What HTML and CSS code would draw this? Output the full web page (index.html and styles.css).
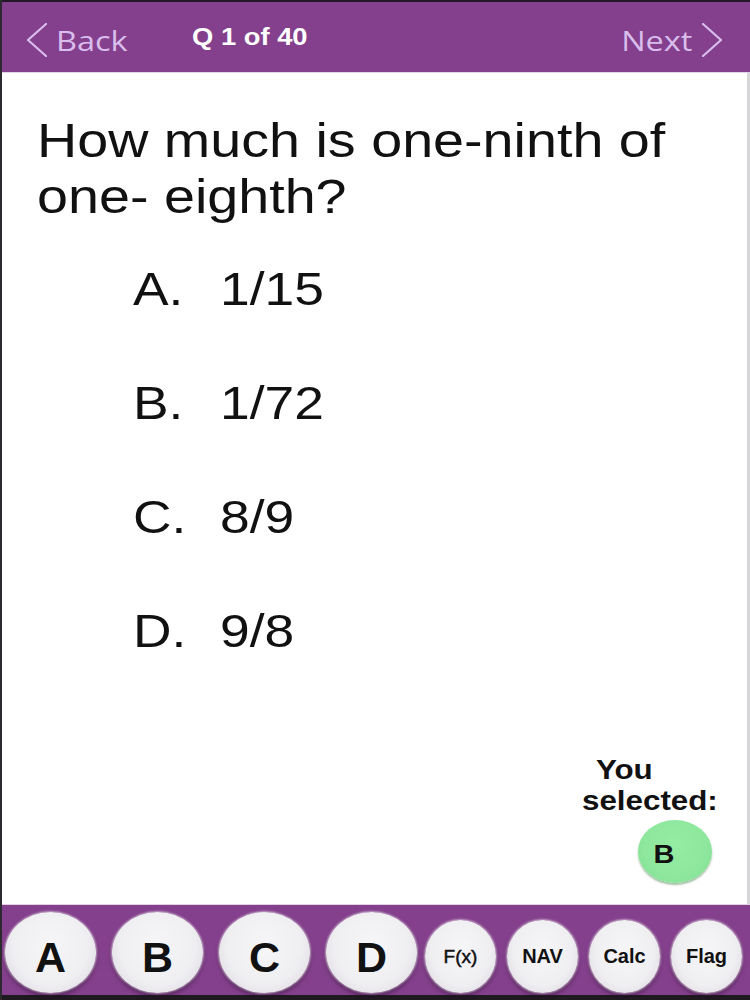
FILE: index.html
```html
<!DOCTYPE html>
<html lang="en">
<head>
<meta charset="utf-8">
<title>Q 1 of 40</title>
<link rel="stylesheet" href="styles.css">
</head>
<body>
<div class="app">
  <header class="topbar">
    <div class="nav-back">
      <svg class="chev" width="22" height="34" viewBox="0 0 22 34"><path d="M20 1 L2 17 L20 33" fill="none" stroke="#d9bdec" stroke-width="2.2" stroke-linecap="round" stroke-linejoin="round"/></svg>
      <span class="nav-text back-text">Back</span>
    </div>
    <div class="title">Q 1 of 40</div>
    <div class="nav-next">
      <span class="nav-text next-text">Next</span>
      <svg class="chev" width="22" height="34" viewBox="0 0 22 34"><path d="M2 1 L20 17 L2 33" fill="none" stroke="#d9bdec" stroke-width="2.2" stroke-linecap="round" stroke-linejoin="round"/></svg>
    </div>
  </header>

  <main class="content">
    <div class="question">How much is one-ninth of one- eighth?</div>
    <div class="options">
      <div class="option"><span class="opt-letter">A.</span><span class="opt-value">1/15</span></div>
      <div class="option"><span class="opt-letter">B.</span><span class="opt-value">1/72</span></div>
      <div class="option"><span class="opt-letter">C.</span><span class="opt-value">8/9</span></div>
      <div class="option"><span class="opt-letter">D.</span><span class="opt-value">9/8</span></div>
    </div>
    <div class="selection">
      <div class="sel-line sel-you">You</div>
      <div class="sel-line">selected:</div>
      <div class="sel-badge"><span class="badge-text">B</span></div>
    </div>
  </main>

  <footer class="bottombar">
    <div class="answers">
      <button class="btn btn-big">A</button>
      <button class="btn btn-big">B</button>
      <button class="btn btn-big">C</button>
      <button class="btn btn-big">D</button>
    </div>
    <div class="tools">
      <button class="btn btn-small btn-fx">F(x)</button>
      <button class="btn btn-small">NAV</button>
      <button class="btn btn-small">Calc</button>
      <button class="btn btn-small">Flag</button>
    </div>
  </footer>
</div>
</body>
</html>
```

FILE: styles.css
```css
* { box-sizing: border-box; }

html, body {
  margin: 0;
  padding: 0;
  width: 750px;
  height: 1000px;
  overflow: hidden;
  background: #ffffff;
}

.app {
  width: 750px;
  height: 1000px;
  display: flex;
  flex-direction: column;
  border-left: 2px solid #2c2a2e;
  font-family: "Liberation Sans", Arial, sans-serif;
  overflow: hidden;
}

/* ---------- top bar ---------- */
.topbar {
  height: 73px;
  flex-shrink: 0;
  background: #84408c;
  border-top: 2px solid #221826;
  border-bottom: 1px solid #e6d4ec;
  display: flex;
  align-items: flex-start;
  padding: 21px 27px 0 24px;
}

.nav-back {
  width: 166px;
  flex-shrink: 0;
  display: flex;
  align-items: flex-start;
}

.chev { display: block; flex-shrink: 0; }

.nav-text {
  display: inline-block;
  font-family: "Open Sans", "Liberation Sans", sans-serif;
  font-size: 28px;
  line-height: 34px;
  color: #d9bdec;
  transform: scaleX(1.16);
}

.back-text {
  margin-left: 8px;
  transform-origin: left center;
}

.next-text {
  margin-right: 9px;
  transform-origin: right center;
}

.title {
  font-family: "Liberation Sans", Arial, sans-serif;
  font-weight: bold;
  font-size: 24px;
  line-height: 28px;
  color: #ffffff;
  transform: scaleX(1.14);
  transform-origin: left center;
}

.nav-next {
  margin-left: auto;
  display: flex;
  align-items: flex-start;
}

/* ---------- content ---------- */
.content {
  flex: 1;
  background: #ffffff;
  border-right: 3px solid #d6d6d8;
  display: flex;
  flex-direction: column;
  align-items: flex-start;
  padding: 40px 0 21px 35px;
  color: #111111;
  overflow: hidden;
}

.question {
  width: 560px;
  font-size: 48px;
  line-height: 56px;
  transform: scaleX(1.16);
  transform-origin: left top;
}

.options {
  margin-top: 7px;
  margin-left: 96px;
  width: 300px;
}

.option {
  display: flex;
  font-size: 46px;
  line-height: 114px;
  transform: scaleX(1.16);
  transform-origin: left center;
}

.opt-letter {
  width: 75px;
  flex-shrink: 0;
}

/* ---------- selection ---------- */
.selection {
  margin-top: auto;
  margin-left: 545px;
  width: 140px;
}

.sel-line {
  width: 120px;
  font-weight: bold;
  font-size: 27px;
  line-height: 31px;
  color: #111111;
  white-space: nowrap;
  transform: scaleX(1.16);
  transform-origin: left center;
}

.sel-you { padding-left: 12px; }

.sel-badge {
  margin-top: 3px;
  margin-left: 56px;
  width: 74px;
  height: 63px;
  border-radius: 50%;
  background: radial-gradient(ellipse at 50% 40%, #95eca3 0%, #8de79c 60%, #80da8f 100%);
  box-shadow: 0 2px 2px rgba(40, 110, 50, 0.45);
  display: flex;
  align-items: center;
  justify-content: center;
  padding: 6px 22px 0 0;
}

.badge-text {
  display: inline-block;
  font-weight: bold;
  font-size: 25px;
  color: #111111;
  transform: scaleX(1.16);
}

/* ---------- bottom bar ---------- */
.bottombar {
  height: 96px;
  flex-shrink: 0;
  background: #84408c;
  border-top: 1px solid #e3d2e6;
  border-bottom: 5px solid #1e1a20;
  display: flex;
  align-items: flex-end;
  padding: 0 0 2px 3px;
}

.answers {
  display: flex;
  align-items: flex-end;
  gap: 16px;
}

.tools {
  display: flex;
  align-items: flex-end;
  gap: 11px;
  margin-left: 8px;
}

.btn {
  border: none;
  margin: 0;
  padding: 0;
  border-radius: 50%;
  font-family: "Liberation Sans", Arial, sans-serif;
  font-weight: bold;
  color: #111111;
  display: flex;
  align-items: center;
  justify-content: center;
  background: radial-gradient(ellipse at 50% 42%, #f6f6f8 0%, #efeef1 58%, #e2dfe5 82%, #cfc6d3 100%);
  box-shadow: 0 0 2px 1px rgba(255, 255, 255, 0.55), 0 3px 4px rgba(30, 0, 35, 0.55);
}

.btn-big {
  width: 91px;
  height: 81px;
  font-size: 43px;
  padding-top: 10px;
}

.btn-small {
  width: 71px;
  height: 73px;
  font-size: 20px;
}

.btn-fx {
  font-size: 19px;
  font-weight: normal;
  -webkit-text-stroke: 0.5px #111111;
}
```
